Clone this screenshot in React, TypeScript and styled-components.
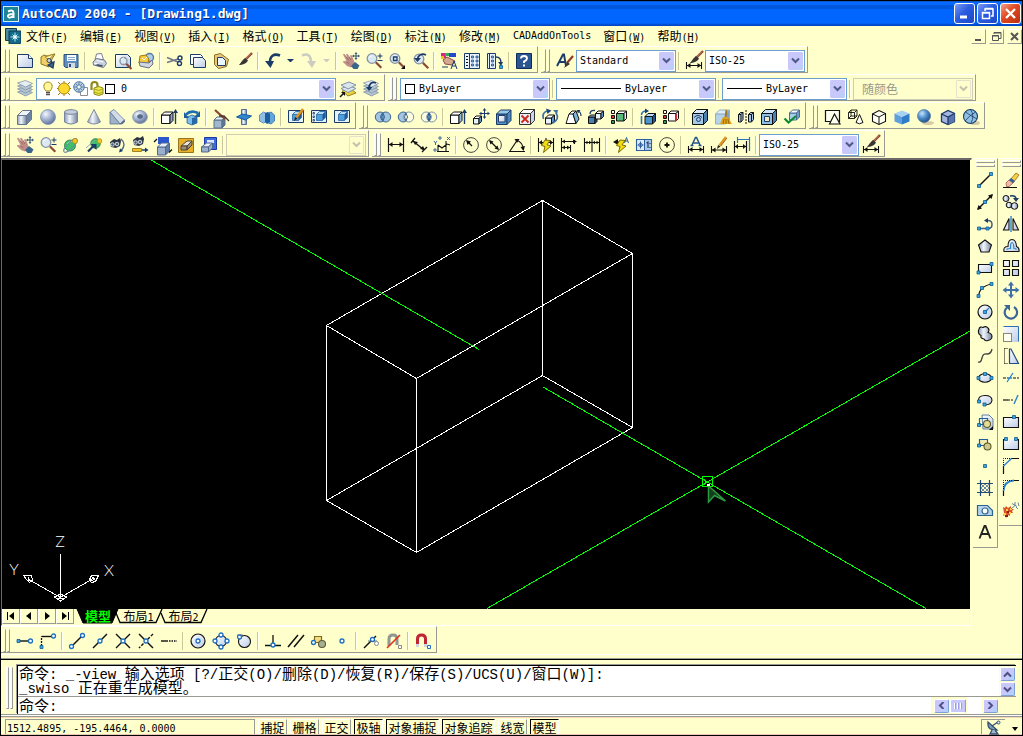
import React, { ReactNode } from 'react';
import styled, { createGlobalStyle, css } from 'styled-components';

const color = {
  face: '#ffffcc',
  shadow: '#9a9a94',
  dark: '#6e6a6a',
  frame: '#6a9fd0',
  lavender: '#c8c8fa',
  navy: '#1b3c68',
};

const GlobalStyle = createGlobalStyle`
  *, *::before, *::after { box-sizing: border-box; }
  html, body { margin: 0; padding: 0; background: #000; }
  body {
    font-family: "DejaVu Sans Mono", "Noto Sans CJK SC", monospace;
    font-size: 10px;
    line-height: 16px;
    color: #000;
  }
  button, input, select { font: inherit; color: inherit; margin: 0; padding: 0; border: 0; background: none; border-radius: 0; }
  button { cursor: default; }
`;

/* ---------- text helpers ---------- */

const Han = styled.span<{ $size: number }>`
  font-family: "Noto Sans CJK SC", sans-serif;
  font-size: ${(p) => p.$size}px;
`;

function Mixed({ text, size = 12 }: { text: string; size?: number }) {
  return (
    <>
      {text.split(/([\u3000-\u9fff]+)/).map((part, i) =>
        i % 2 ? <Han key={i} $size={size}>{part}</Han> : part,
      )}
    </>
  );
}

/* ---------- icon drawing ---------- */

const K = '#111';
const N = '#1b3c68';
const G1 = 'url(#steel)';
const G2 = 'url(#ball)';
const G3 = 'url(#azure)';
const G4 = 'url(#paper)';

type ShapeProps = { d: string; s?: string; f?: string; w?: number; dash?: string };
const P = ({ d, s = K, f = 'none', w = 1, dash }: ShapeProps) => (
  <path d={d} stroke={s} fill={f} strokeWidth={w} strokeDasharray={dash} />
);
const F = ({ d, f = K }: { d: string; f?: string }) => <path d={d} fill={f} />;
type CircleProps = { x: number; y: number; r: number; s?: string; f?: string; w?: number };
const O = ({ x, y, r, s = K, f = 'none', w = 1 }: CircleProps) => (
  <circle cx={x} cy={y} r={r} stroke={s} fill={f} strokeWidth={w} />
);
/* grip point of a drafting tool */
const D = ({ x, y }: { x: number; y: number }) => (
  <path d={`M${x - 1.5} ${y - 1.5}h3v3h-3z`} fill="#3aa6e0" stroke="#0b5c94" strokeWidth={0.8} />
);
/* object snap marker */
const S = ({ x, y }: { x: number; y: number }) => <O x={x} y={y} r={2} s="#1c6fc4" f="#fff" w={1.3} />;

type CubeProps = { x: number; y: number; a?: number; b?: number; front?: string; top?: string; side?: string; s?: string };
const Cube = ({ x, y, a = 8, b = 4, front = '#dfe8f4', top = '#fff', side = '#7d9cc4', s = K }: CubeProps) => (
  <g stroke={s} strokeLinejoin="round">
    <path d={`M${x} ${y + b}h${a}v${a}h${-a}z`} fill={front} />
    <path d={`M${x} ${y + b}l${b} ${-b}h${a}l${-b} ${b}z`} fill={top} />
    <path d={`M${x + a} ${y + b}l${b} ${-b}v${a}l${-b} ${b}z`} fill={side} />
  </g>
);

const Lens = ({ x = 6, y = 5.5, r = 4.8 }: { x?: number; y?: number; r?: number }) => (
  <>
    <P d={`M${x + r - 1} ${y + r - 1}L${x + r + 4.5} ${y + r + 4.5}`} s="#8a4a34" w={2.2} />
    <O x={x} y={y} r={r} s="#8592a2" f="#dbe9f2" w={1.3} />
    <P d={`M${x - 2.5} ${y - 1}q1-2 3-2`} s="#fff" />
  </>
);
const Hand = () => (
  <>
    <F d="M0 1.500q1-1.500 2 0l3 4-2-4q1-1.500 2 0l3 4-1-3q1.500-1 2 0.500l2 5 1 3-4 3.500-4-1.500-4-4q0-1.500 1.500-1l2.500 1z" f="#c08e88" />
    <P d="M3 3.500l3 4M6 4l2 3M2.500 8l4 3" s="#94605e" w={0.8} />
    <F d="M8 13l4-4 4.500 3.500-2 3.500h-4z" f="#3b6588" />
  </>
);
const Brush = () => (
  <>
    <P d="M16 0L9 7" s="#8a3c2c" w={2.4} />
    <P d="M15 0.500L9.500 6" s="#e8b090" w={0.7} />
    <F d="M9 5l3 2.500C10 11 6 12 3 12 5 10 6 7 9 5z" f="#3a3434" />
  </>
);
const DimBrush = () => (
  <>
    <g transform="translate(1 -2)"><Brush /></g>
    <P d="M0.500 9v7M15.500 9v7M1 12.500h14" w={1.1} />
    <F d="M1 12.500l3.500-2.500v5zM15 12.500l-3.500-2.500v5z" />
  </>
);
const Layers = () => (
  <>
    {[10, 7, 4, 1].map((y, i) => (
      <P key={y} d={`M0.500 ${y + 1}l8-2.500 7 3-7 3.500z`} s="#8194a8" f={i === 3 ? '#e6eef2' : '#b4c4d0'} w={0.8} />
    ))}
  </>
);
const Bolt = () => <P d="M7 3L3.500 8.500l3.500 1L5.500 15.500 13 9l-4-1.200L12 3.500z" s="#6c5c00" f="#f4dc10" w={0.9} />;
const Picture = () => <P d="M0.500 1.500h15v12h-15z" s={N} f="#e6f1fb" />;
const Pencil = () => (
  <>
    <P d="M15 0L8.500 8.500" s="#e0981e" w={2.6} />
    <P d="M16 1L9.800 9" s="#8a4c10" w={0.8} />
    <F d="M9.500 9.500L6 12l1-4z" f="#2a2018" />
  </>
);
const Camera = () => (
  <>
    <F d="M1 5l4-3 3 1 3-2 1 3-1 5-4 2-5-1z" f="#2b3440" />
    <O x={3.500} y={7.500} r={1.800} s="#dfe6ee" f="#57677c" w={0.9} />
    <O x={8} y={7} r={1.800} s="#dfe6ee" f="#57677c" w={0.9} />
  </>
);
const Faces = ({ f }: { f: string }) => (
  <>
    <P d="M0.500 1.500h3v3h-3z" f="#fff" />
    <P d="M0.500 6.500h3v3h-3z" f="#e03030" />
    <P d="M0.500 11.500h3v3h-3z" f={f} />
  </>
);
const AxisArrow = () => (
  <>
    <P d="M14.500 3v12" s={N} w={1.4} />
    <F d="M14.500 0l2.500 4h-5z" f={N} />
  </>
);
const BlueSolid = () => <Cube x={4.500} y={2.500} a={6} b={3} front="#4b9fdc" top="#b5dcf5" side="#1d5c9c" s="#3b7ab4" />;

const icons: Record<string, ReactNode> = {
  new: <><P d="M0.500 1.500h11l4 4v9h-15z" s={N} f={G4} /><P d="M11.500 1.500v4h4" s={N} f="#fff" /></>,
  open: <><P d="M1 4l3-2 3 1 8-2-3 5-3 8-8-3z" s="#8a7324" f="#f2cf62" /><P d="M5 4l9-3-5 6z" s="#a88c34" f="#fff2a8" /><P d="M7 6.500q5 0 5 4M8 12l6-3-1 6z" s={N} f="#42668c" w={1.3} /><O x={9} y={7.500} r={2} s="#384858" f="#ccd9e4" /></>,
  save: <><P d="M1 1.500h14v13H2.500l-1.500-1.500z" s="#294f80" f="#5f8dbf" /><F d="M4 2h9v6H4z" f="#f5faff" /><P d="M5 4.500h7M5 6.500h7" s="#8ba8c6" /><F d="M5 10h7v5H5z" f="#d2dbe4" /><F d="M6 11h2v3H6z" f="#294f80" /></>,
  print: <><P d="M3 7l1.500-6 5-0.500 2 6z" s="#77808c" f="#fff" /><P d="M1 9l3.500-3.500 8 1.500 2 3.500-3 4-10-2.500z" s="#6c7890" f="#c8d0e0" /><P d="M2 10l9 2.500M4.500 7.500l7 1.500" s="#fff" /><F d="M5 11l6 1-1 2-6-1.500z" f="#4a546c" /></>,
  preview: <><P d="M0.500 1.500h12l3 3v10h-15z" s={N} f={G4} /><Lens x={8.500} y={8} r={3.500} /></>,
  publish: <><O x={11.500} y={4.500} r={4} s="#5b7896" f="#a9d0ee" w={1.400} /><P d="M2 3l6-1 3 4-2 7-8-3z" s="#a0761a" f="#f7cb3a" /><P d="M1 9l10 1 3-3 1 4-4 4-9-2z" s="#667088" f="#d2d6de" /><P d="M4 5l2 2 3-3" s="#fff" /></>,
  cut: <><P d="M0 4.500l11 4.500M0 9.500l11-3.500" s="#6e7888" w={1.400} /><O x={13} y={5} r={2} s="#1c3a68" w={1.400} /><O x={12.500} y={10.500} r={2} s="#1c3a68" w={1.400} /></>,
  copy: <><P d="M0.500 1.500h10l2 2v8h-12z" s={N} f="#fff" /><P d="M3.500 4.500h9l3 3v7h-12z" s={N} f={G4} /></>,
  paste: <><P d="M1.500 2l6-1.500 8 6-2 7-8 2-4-4z" s="#8a6c24" f="#e6c77c" /><P d="M4.500 4.500h5l3 3v5h-8z" s={N} f="#eaf6ff" /></>,
  brush: <Brush />,
  undo: <><P d="M15 2.500C9 0 4.500 3 5 10" s={N} w={2.600} /><F d="M0 8h9l-3.500 7z" f={N} /></>,
  redo: <><P d="M1 2.500c6-2.500 9 0 9 7" s="#ccccc0" w={2.600} /><F d="M6 8h9l-4 7z" f="#ccccc0" /></>,
  pan: <><Hand /><P d="M13 0v6M10 3h6" s={N} w={0.9} /><P d="M12 1l1-1.500 1 1.500M12 5l1 1.500 1-1.500M11 2l-1.500 1 1.500 1M15 2l1.500 1-1.500 1" s={N} w={0.8} /></>,
  zoomRt: <><Lens /><P d="M14 0.500v5M11.500 3h5M11.500 7.500h5" s={N} /></>,
  zoomWin: <><Lens /><P d="M4.500 4h3.500v3.500h-3.500z" s={N} w={1.300} /><F d="M16 12v4h-4z" /></>,
  zoomPrev: <><Lens x={7} y={6} /><P d="M14 2C10 0 6 2 5.500 6" s={N} w={1.800} /><F d="M2 5h7l-3.500 4z" f={N} /></>,
  props: <><F d="M0 0h5v5H0z" f="#d8248c" /><F d="M4 0h4v3H4z" f="#30b050" /><F d="M8 0h7v4H8z" f="#2548cc" /><F d="M0 3h3v3H0z" f="#e8c010" /><P d="M2 7l4-3 8 4-3 4-7-1z" s="#8a4c44" f="#d6a890" /><P d="M10 16l3-8 3 8M11 13h4M1 14h6" s={N} /></>,
  dcenter: <><P d="M0.500 0.500h15v15h-15z" s={N} f="#eaf4ff" /><P d="M5.500 0.500v15" s={N} /><P d="M2 3.500h2M2 6.500h2M2 9.500h2M2 12.500h2" w={1.200} /><P d="M7.500 3h2v2h-2zM12 3h2v2h-2zM7.500 7h2v2h-2zM12 7h2v2h-2zM7.500 11h2v2h-2zM12 11h2v2h-2z" s="#254f88" f="#89b4dc" w={0.8} /></>,
  palettes: <><P d="M0.500 0.500h8v15h-8z" s={N} f="#eaf4ff" /><P d="M2.500 0.500v15" s={N} /><P d="M4.500 3h2v2h-2zM4.500 7h2v2h-2zM4.500 11h2v2h-2z" s="#254f88" f="#89b4dc" w={0.8} /><P d="M9 4q5 0 5 6" s={N} w={1.400} /><F d="M11 9h5l-2 4z" f={N} /><D x={14} y={14} /></>,
  help: <><P d="M0.500 0.500h15v15h-15z" s="#0f2c5e" f="#2a5590" /><P d="M5 5.500q0-2.500 3-2.500t3 2.500q0 1.500-3 3V10M8 11.500v2" s="#fff" w={1.900} /></>,
  textStyle: <><P d="M0 13L6 1.500h1l2 11.500M2.500 9h6" s={N} w={1.900} /><P d="M16 3l-6 7" s="#8a3c2c" w={2.200} /><F d="M10 9l3 2-6 4z" f="#3a3434" /></>,
  dimBrush: <DimBrush />,
  layers: <Layers />,
  layerCur: <><P d="M2 10l9-2 5 4-8 3z" s="#9a8320" f="#e9d13c" /><P d="M1 7.500l8-3 7 3-8 4z" s="#8194a8" f="#dbe6ea" /><P d="M1 4l8-3 7 3-8 4z" s="#8194a8" f="#dbe6ea" /><P d="M0 16l4-4" w={1.500} /><F d="M5 11v4l-4-4z" /></>,
  layerPrev: <><Layers /><P d="M13 2C9 0 6 3 6 7" s={N} w={1.800} /><F d="M3 6h6.500l-3.500 4z" f={N} /></>,
  bulb: <><P d="M5 10C1 6 3 1 7 1s6 5 2 9z" s="#a08a18" f="#fff79a" /><P d="M5 11.500h4M5 13.500h4" s="#545454" w={1.300} /></>,
  sun: <><P d="M1 1l3 3M13 1l-3 3M1 14l3-3M13 14l-3-3M7 0v2M7 15v-2M0 7.500h2M14 7.500h-2" s="#987c10" /><O x={7} y={7.500} r={5.500} s="#b08a10" f="#ffd92e" /></>,
  freeze: <><P d="M7.500 6.500h7v8h-7z" s="#8c8c94" f="#fff" /><O x={6} y={6} r={5.300} s="#56789c" f="#b7d0e4" /><P d="M6 1v10M1 6h10M2.500 2.500l7 7M9.500 2.500l-7 7" s="#56789c" w={0.8} /><O x={6} y={6} r={2.200} s="#56789c" f="#e8f4fb" /></>,
  lock: <><P d="M2.500 9V4q0-3 3-3t3 3v2" s="#8f8a18" w={2.200} /><P d="M5 7q5-3 9 0v6q-4 3-9 0z" s="#8f8a18" f="#ece84a" /><P d="M5 8q5 3 9 0M5 11q5 3 9 0" s="#a8a420" /></>,
  box: <Cube x={0.500} y={1.500} a={9} b={5} front={G1} top="#f0f4fa" side="#6b82a2" s="#65788f" />,
  sphere: <O x={8} y={8} r={7.500} s="#7d92b0" f={G2} w={0.8} />,
  cylinder: <><P d="M1.500 3v10q6.500 4 13 0V3" s="#75849a" f={G1} /><ellipse cx="8" cy="3" rx="6.500" ry="2.300" fill="#c4cedd" stroke="#75849a" /></>,
  cone: <P d="M8 0.500L14.500 13q-6.500 4-13 0z" s="#7d8aa0" f={G1} />,
  wedge: <><P d="M1 3l4-2.500L15.500 11l-4.500 4z" s="#8193a8" f="#d2dce8" /><P d="M1 3l10 12H1z" s="#61758f" f="#9fb2ca" w={0.8} /><P d="M11 15l4.500-4v2l-2.500 2z" s="#61758f" f="#465e80" w={0.8} /></>,
  torus: <><ellipse cx="8" cy="8" rx="7.300" ry="6.500" fill={G2} stroke="#8b98aa" /><ellipse cx="8" cy="7.500" rx="2.500" ry="1.800" fill="#5b6c84" stroke="#4f6682" /></>,
  extrude: <><Cube x={0.500} y={3} a={8.500} b={3} side="#8aa4cc" front="#fff" /><AxisArrow /></>,
  revolve: <><P d="M3 8l5-2 5 2v6l-5 2-5-2z" s="#2a6090" f="#7dbcec" w={0.8} /><F d="M8 9l5-1v6l-5 2z" f="#2769a6" /><P d="M2 5.500q5-5 12-1.500" s="#1d6eae" w={2.600} /><F d="M16 2v6h-6z" f="#1d5e9c" /><F d="M0 3v6h5z" f="#1d5e9c" /></>,
  slice: <><Cube x={1} y={8} a={8} b={3} front="#9fb8d0" top="#e6eef6" side="#58769a" s="#5b7088" /><P d="M2 1l10 9" s="#8a4630" w={2.200} /><P d="M6 7l5 0 5 5" s="#49382e" w={1.300} /></>,
  section: <><P d="M5.500 0.500h5v15h-5z" s="#526e94" f={G1} /><P d="M0.500 8l6-3 9 2-6 4z" s="#125a9c" f="#2e86cc" /></>,
  interfere: <><P d="M0.500 6l4-3 4 2v7l-4 2-4-2z" s="#5c92c4" f="#8fc0e4" /><P d="M7 5l5-2 3.500 3v6l-3.500 3-5-2z" s="#4780ba" f="#64a6da" /><F d="M6 4l3-1 2 2v8l-3 2-2-2z" f="#1c5ea2" /></>,
  setDraw: <><Picture /><BlueSolid /><Pencil /></>,
  setView: <><Picture /><g transform="translate(1 0)"><BlueSolid /></g><P d="M2 3.500h1.500v1.500h-1.500zM2 7h1.500v1.500h-1.500zM2 10.500h1.500v1.500h-1.500z" s={N} f="#fff" w={0.8} /></>,
  setProf: <><Picture /><BlueSolid /></>,
  union: <><O x={5.300} y={8} r={5} s="#3a658e" f="#a3c6e2" /><O x={10.700} y={8} r={5} s="#3a658e" f="#a3c6e2" /><P d="M8 4q-3 4 0 8 3-4 0-8z" s="#3a658e" f="#5d97c8" /></>,
  subtract: <><O x={5.300} y={8} r={5} s="#3a658e" f="#a3c6e2" /><O x={10.700} y={8} r={5} s="#7590ac" f="#fffde0" /><P d="M8 4q-3 4 0 8 3-4 0-8" s="#3a658e" /></>,
  intersect: <><O x={5.300} y={8} r={5} s="#7590ac" f="#fffde0" /><O x={10.700} y={8} r={5} s="#7590ac" /><P d="M8 4q-3 4 0 8 3-4 0-8z" s="#2b5580" f="#5d97c8" /></>,
  faceExtrude: <><Cube x={0.500} y={3} a={8.500} b={3} side="#8fc0e4" front="#fff" /><AxisArrow /></>,
  faceMove: <><Cube x={0.500} y={7} a={5.500} b={2.500} front="#e9f4fa" side="#5b98cc" /><P d="M11.500 0v9M7 4.500h9" s={N} /><F d="M11.500-1l1.800 2.500h-3.600zM11.500 10l1.800-2.500h-3.600zM6 4.500L8.500 2.700v3.600zM17 4.500l-2.500-1.800v3.600z" f={N} /></>,
  faceOffset: <><Cube x={0.500} y={1} a={10.500} b={4} front="#5a96c8" top="#9cc8e8" side="#4f88bc" s={N} /><P d="M2.500 6.500h6.500v6.500h-6.500z" s={N} f={G4} /></>,
  faceDelete: <><Cube x={0.500} y={0.500} a={11} b={4} front="#e6eef8" top="#fff" side="#c8d6ea" s="#333" /><P d="M2.500 6.500l7 7M9.500 6.500l-7 7" s="#d02418" w={1.800} /></>,
  faceRotate: <><Cube x={3.500} y={6} a={6} b={3} front="#e9f4fa" side="#5b98cc" /><P d="M1.500 10Q-0.500 4 5 2M14 4q4 6-3 10" s="#3c6fa4" w={1.700} /><F d="M4-0.500l5.500 2-4 3.500z" f="#1c4878" /><F d="M11 1l5 0-1 4.500z" f="#3c6fa4" /></>,
  faceTaper: <><P d="M1 14.500L4 5l3-3h4l-3 3 3 9.500z" f="#fff" /><P d="M8 5l3-3 3 8-3 4.500z" f="#7db4de" /><P d="M4 5h4" /><P d="M13 2q3 1 3 5" s={N} w={1.200} /><F d="M11.500 1l4 0-2.500 3.500z" f={N} /></>,
  faceCopy: <><Cube x={0.500} y={6} a={6.500} b={2} front="#4b7fae" top="#9cc4e4" side="#2f5c8c" /><Cube x={7.500} y={2} a={5.500} b={2.500} front="#e9f4fa" side="#5b98cc" /><P d="M2 5q0-4 5-3.500" s={N} w={1.300} /></>,
  faceColor: <><Faces f="#30a050" /><Cube x={5.500} y={2} a={7.500} b={2.500} front="#55b87c" top="#fff" side="#dfe8f4" /></>,
  edgeCopy: <><Cube x={5} y={4.500} a={7.500} b={3} front="#4b96d0" top="#b9dcf4" side="#1d5690" /><P d="M1.500 15V6q0-4 5-4" s="#2b73b4" w={1.600} dash="8 1" /><F d="M5-0.500l4 2.500-4 2.500z" f={N} /></>,
  edgeColor: <><Faces f="#30a050" /><Cube x={5.500} y={2} a={7.500} b={2.500} front="#fff" top="#fff" side="#e8eef8" /><P d="M13 5v7" s="#e02020" w={1.600} /></>,
  imprint: <><Cube x={0.500} y={0.500} a={11} b={4} front="#a6c9e6" top="#dcecf8" side="#4c80b0" /><O x={6.500} y={10.500} r={2} s={N} /><P d="M2 8.500q4-4 8 0" s={N} /></>,
  clean: <><Cube x={0.500} y={1} a={10} b={4} front="#b6d3ea" top="#dcecf8" side="#7ca4c8" s="#93aec6" /><P d="M11.500 1l-1 7" s="#a87414" w={1.800} /><F d="M8 8h5l4 7H5z" f="#e0a418" /><P d="M9 10l-1 5M11 10v5M13 10l1 5" s="#8a5c10" w={0.8} /></>,
  separate: <><P d="M0.500 5.500l2-2h2.500v7l-2 2.500h-2.500zM10.500 5.500l2-2h3v7l-2 2.500h-3z" f="#a6c9e6" /><P d="M0.500 5.500h2.500v7M10.500 5.500h3v7M3 5.500l2-2M13.500 5.500l2-2" /><P d="M8 1v14" dash="2 1" /></>,
  shell: <><Cube x={0.500} y={0.500} a={11} b={4} front="#8fc0e4" top="#cde5f8" side="#4c80b0" /><P d="M3.500 7.500h5v5h-5z" s={N} f="#f5e8c8" /></>,
  check: <><Cube x={5.500} y={1} a={7} b={3} front="#a6cdec" top="#fff" side="#6c9cc8" s="#486c94" /><P d="M0.500 9.500l4 4L12 7" s="#0d8a34" w={2.200} /></>,
  wire2d: <><P d="M0.500 1.500h14v11h-14z" f="#fffff0" w={1.200} /><P d="M4.500 15L9.500 5l5.500 10z" f="#fffff0" w={1.200} /></>,
  wire3d: <><P d="M0.500 3.500h6v6h-6zM3 1h6v6H3zM0.500 3.500L3 1M6.500 3.500L9 1M6.500 9.500L9 7M0.500 9.500L3 7" w={0.9} /><P d="M11.500 5.500L8 13.500q3.500 2.500 7 0z" f="#fffff0" /></>,
  hidden: <><P d="M1.500 5L8 1.500l6.500 3v8L8 15.500l-6.500-3z" f="#fffff4" w={1.100} /><P d="M1.500 5L8 8l6.500-3.500M8 8v7.500" /></>,
  flat: <><F d="M0.500 4.500L8 1.500l7.500 3L8 8z" f="#a8d2f4" /><F d="M0.500 4.500L8 8v7.500l-7.500-3z" f="#5da0dc" /><F d="M15.500 4.500L8 8v7.500l7.500-3z" f="#2f7cc8" /></>,
  gouraud: <><ellipse cx="11" cy="14" rx="6" ry="2" fill="#d8cca4" /><O x={7} y={7} r={6.500} s="#3a6a9a" f={G3} w={0.600} /></>,
  flatEdge: <><P d="M1.500 5L8 1.500l6.500 3v8L8 15.500l-6.500-3z" s={N} f="#a6b4e0" w={1.300} /><F d="M8 8l6.500-3.500v8L8 15.500z" f="#5b74b0" /><P d="M1.500 5L8 8l6.500-3.500M8 8v7.500" s={N} w={1.300} /></>,
  gouraudEdge: <><ellipse cx="12" cy="14" rx="5" ry="2" fill="#d8cca4" /><O x={7.500} y={7.500} r={7} s={N} f="#8fc0e4" w={1.100} /><P d="M2.500 3Q8 7 14 10M12.500 3Q6 7 2 12M7.500 0.500Q12 7 8 14" s={N} w={0.8} /></>,
  orbit: <><O x={7} y={8.500} r={5.500} s="#1b7a34" f="#3cc068" w={0.8} /><P d="M4 7q2-3 5-3" s="#c8f4d4" /><ellipse cx="7.500" cy="8.500" rx="9" ry="3" transform="rotate(-45 7.500 8.500)" fill="none" stroke="#6e8ca8" /><O x={12} y={4} r={2.500} s="#b48a14" f="#f4c828" w={0.8} /></>,
  contOrbit: <><O x={9.500} y={6.500} r={4.800} s="#1b7a34" f="#3cc068" w={0.8} /><O x={13.500} y={4} r={2.300} s="#b48a14" f="#f4c828" w={0.8} /><P d="M2 14.500l6-6" s={N} w={2.200} /><F d="M4.500 7h6v6z" f={N} /><P d="M0 11L9 3" s="#8ea8be" /></>,
  swivel: <><Camera /><P d="M12 2q6 5 0 12" s="#4b6a90" w={1.400} /><F d="M10 15.500l1-4 3 2.500z" f={N} /></>,
  distance: <><g transform="translate(0 -2)"><Camera /></g><P d="M0.500 11.500h9v3h-9z" s="#8a6a10" f="#f0c020" w={0.8} /><P d="M10 13h4" s={N} w={1.500} /><F d="M13 10.500l3.500 2.500-3.500 2.500z" f={N} /></>,
  clipAdjust: <><F d="M3 0h11v7H3z" f="#2c57cc" /><Cube x={2.500} y={6} a={8} b={4} front="#9ab0cc" top="#e8eef6" side="#5e7ca4" s="#51698c" /><P d="M-1 5l3-3M14 15.500l3-3" w={1.300} /></>,
  clipFront: <><P d="M0.500 1.500h15v14h-15z" s="#9a741c" f="#e8b028" /><path d="M3 9l6-5h5l-5 5z" fill="#ece4d0" stroke="#4c4436" /><path d="M3 9h6v4H3zM9 9l5-5v4l-5 5z" fill="#9a8c78" stroke="#4c4436" /></>,
  clipBack: <><P d="M3.500 0.500h12v12h-12z" s="#1a3a9c" f="#3f6be0" /><F d="M6 3h7v3H6z" f="#dce6ff" /><path d="M0.500 10l5-4h6l-4 4z" fill="#e8eef6" stroke="#51698c" /><path d="M0.500 10h7v5h-7zM7.500 10l4-4v5l-4 4z" fill="#9ab0cc" stroke="#51698c" /></>,
  dimLinear: <><P d="M0.500 1v14M15.500 1v14M1 7.500h14" w={1.200} /><F d="M1 7.500l3.500-2.500v5zM15 7.500l-3.500-2.500v5z" /></>,
  dimAligned: <><P d="M0 6l4-5M11 15l5-5M2 4l11 9" w={1.300} /><F d="M2 4l5 1-3 3zM14 13l-5-1 3-3z" /></>,
  dimOrd: <><P d="M3 14.500h12M4 8v6M4 8l4 3 5-4 3 1M12 4v10" w={1.100} /><P d="M0 4l1.500 2L3 4M1.500 6v2M5 0h2v2H5zM13 0l3 3M16 0l-3 3M0 12h2v2H0z" s="#2c5c94" w={0.900} /></>,
  dimRadius: <><O x={8} y={8} r={7.400} s="#333" w={0.9} /><P d="M9 9L4.500 4.500" w={1.300} /><F d="M3 3l5 1.500L4.500 8z" /></>,
  dimDia: <><O x={8} y={8} r={7.400} s="#333" w={0.9} /><P d="M4 4l8 8" w={1.300} /><F d="M3 3l4.500 1.500-3 3zM13 13l-4.500-1.500 3-3z" /></>,
  dimAng: <><P d="M0 14.500h16M1 14L9 2M7 3q7 2 7.500 10" w={1.200} /><F d="M5.500 2l5 0-2.500 4zM14.500 14l-3-4 4.500-1z" /></>,
  dimQuick: <><P d="M0.500 1v14M15.500 1v14M8 1v3M1 5.500h14" w={1.100} /><F d="M1 5.500L4 3v5zM15 5.500L12 3v5z" /><Bolt /></>,
  dimBase: <><P d="M0.500 1v14M1 4.500h12M1 10.500h8M9.500 8v7M13.500 3v4" w={1.100} /><F d="M1 4.500L4 2.500v4zM16 4.500l-4-2v4zM1 10.500l3-2v4zM9 10.500l-3-2v4z" /></>,
  dimCont: <><P d="M0.500 1v14M8 1v14M15.500 1v14M1 5.500h14" w={1.100} /><F d="M1 5.500l2.500-1.800v3.600zM7.500 5.500l-2.500-1.800v3.600zM8.500 5.500l2.500-1.800v3.600zM15 5.500l-2.500-1.800v3.600z" /></>,
  leader: <><P d="M2 5h8" w={1.300} /><F d="M0 5l5-3v6z" /><P d="M11.500 6L13.500 0.500 15.500 6M12 4h3" s="#2c5c94" /><Bolt /></>,
  tolerance: <><P d="M0.500 2.500h15v11h-15z" s="#2c5f9c" f="#dcebf8" w={1.100} /><F d="M9 3h6v10H9z" f="#a9c8e8" /><P d="M8.500 2.500v11M4.500 4.500v7M1.500 8h6" s="#2c5f9c" /><O x={4.500} y={8} r={1.800} s="#2c5f9c" w={0.8} /><P d="M10.500 6l1.500-1v6M14 6v1M14 10v1" s={N} w={1.200} /></>,
  centerMark: <><O x={8} y={8} r={7.400} s="#333" w={0.9} /><P d="M8 5.500v5M5.500 8h5" w={1.800} /></>,
  dimEdit: <><P d="M3.500 9L7.500 0.500h1l4 8.500M5 6h6M2.500 8.500h3M10.500 8.500h3" s="#24548c" w={1.500} /><P d="M0.500 9v7M15.500 9v7M1 12.500h14" w={1.100} /><F d="M1 12.500L4.500 10v5zM15 12.500L11.500 10v5z" /></>,
  dimTedit: <><Pencil /><P d="M0.500 9v7M15.500 9v7M1 13h14" w={1.100} /><F d="M1 13l3.500-2.500v5zM15 13l-3.500-2.500v5z" /></>,
  dimUpdate: <><P d="M3.500 0v6M15.500 0v14M4 2.500h11" s="#2f72b8" w={1.200} /><P d="M0.500 4v12M12.500 4v12M1 9.500h11" w={1.200} /><F d="M1 9.500L4 7v5zM12 9.500L9 7v5z" /></>,

  line: <><P d="M2 14L14 2" w={1.500} /><D x={2} y={14} /><D x={14} y={2} /></>,
  xline: <><P d="M1 15L15 1" w={1.500} /><F d="M0 16l1.500-5 3.500 3.500zM16 0l-5 1.500L14.500 5z" /><D x={8} y={8} /></>,
  pline: <><P d="M2 12.500h9q4 0 4-4T11 4.500" s="#4a5c78" w={1.500} /><D x={2} y={12.500} /><D x={10.500} y={12.500} /><F d="M7 4.500l4-2.500v5z" f={N} /></>,
  polygon: <P d="M8 2L14.500 7l-2.500 7h-8L1.500 7z" f={G1} w={1.100} />,
  rect: <><P d="M1.500 4.500h13v8h-13z" f={G4} w={1.100} /><D x={1.500} y={12.500} /><D x={14.500} y={4} /></>,
  arc: <><P d="M1.500 15Q2 4 15 2" w={1.200} /><D x={1.500} y={14} /><D x={5} y={6} /><D x={14.500} y={2} /></>,
  circle: <><O x={8} y={8} r={7} f={G4} w={1.200} /><P d="M8 8l4-4" s="#2a82cc" w={1.500} /><D x={8} y={8} /></>,
  revcloud: <P d="M2 3q1-3 4-1.500 3-2 5 0.500 2 2 0 4.500 4 1 4 4t-4 4q-3 1-4-1.500-4-0.500-3-3.500-4-2-2-6.500z" f={G1} w={1.100} />,
  spline: <P d="M1 14q3 1 4-4t5-4q4 0 5-5" s="#444" w={1.300} />,
  ellipse: <><ellipse cx="8" cy="8" rx="6.500" ry="4.200" fill={G4} stroke={K} strokeWidth="1.100" /><D x={1.500} y={8} /><D x={14.500} y={8} /><D x={8} y={4} /></>,
  ellipseArc: <><P d="M1.500 9Q1 3.500 8 3.500t7 5Q14 13 8 13" f={G4} w={1.100} /><D x={2} y={9.500} /><D x={7.500} y={12.500} /></>,
  insert: <><P d="M5 1h7l4 4v10H6z" s="#6080a0" f={G4} /><P d="M2.500 4.500h8v6h-8z" s="#245e98" w={1.200} /><O x={10} y={10} r={3.500} s="#5c5a28" f="#e4dc98" w={1.100} /><D x={2} y={11} /><F d="M16 12v4h-4z" /></>,
  block: <><P d="M2.500 3.500h8v6h-8z" s="#245e98" f="#f4ecae" w={1.200} /><O x={10.500} y={10.500} r={3.500} s="#5c5a28" f="#cfc88c" w={1.100} /><D x={2} y={9.500} /></>,
  point: <D x={8} y={8} />,
  hatch: <><P d="M3.500 0v16M12.500 0v16M0 3.500h16M0 12.500h16" s="#254a78" w={1.200} /><P d="M4 8l4-4M4 12l8-8M8 12l4-4M4 4l8 8M4 8l4 4M8 4l4 4" s="#2a5488" w={0.700} /></>,
  region: <><P d="M0.500 3.500h10l5 5v5h-15z" s="#2c6490" f="#b4d4ea" w={1.200} /><O x={8} y={9} r={3} s="#2c6490" f="#fff" w={1.200} /></>,
  mtext: <P d="M2.500 14.500L7.500 2h1l5 12.500M4.500 10h7" s="#222" w={1.900} />,

  erase: <><P d="M0 15.500h14" /><P d="M3 11l3-3 4 3-4 3.500H3.500z" s="#a05a50" f="#f2b8a8" w={0.8} /><P d="M7 8l6-7 3 2-6 8z" s="#9a6414" f="#f4d048" w={0.8} /><F d="M6 8l2-2 4 3-2 2z" f="#3060a0" /></>,
  copyObj: <><O x={3} y={4.500} r={3} f={G1} /><O x={6} y={11} r={2.800} f={G1} /><O x={11.500} y={12} r={3.300} f={G1} /><P d="M7 2q6-1 6 3" s={N} w={1.500} /><F d="M10 4h6l-3 4z" f={N} /></>,
  mirror: <><P d="M6 2.500v11.500h-5.500zM10 2.500v11.500h5.500z" f={G4} w={1.100} /><P d="M8 0v16" s="#2a82cc" w={1.400} /></>,
  offset: <><P d="M1 13.500q-1-5 4-5 0-7 4-7t4.500 7q3 1 2.500 5z" f={G4} w={1.100} /><P d="M3.500 11.500q1-1 4-1 0-6 1.500-6t2 6q2 0 2.500 1" s="#2a82cc" w={1.200} /></>,
  array: <P d="M0.500 0.500h6v6h-6zM9.500 0.500h6v6h-6zM0.500 9.500h6v6h-6zM9.500 9.500h6v6h-6z" f={G4} w={1.100} />,
  move: <><P d="M8 2v12M2 8h12" s="#3f70a8" w={2} /><F d="M8-0.500l3 4H5zM8 16.500l3-4H5zM-0.500 8l4-3v6zM16.500 8l-4-3v6z" f="#3f70a8" /></>,
  rotate: <><P d="M4 3.500A6.200 6.200 0 1 0 11 3" s="#3a6698" w={2.200} /><F d="M1 1h6v6z" f="#3a6698" /></>,
  scale: <><F d="M0 0h16v16H9V7H0z" f={G4} /><P d="M0.500 0.500h15v15" s="#2c70b0" /><P d="M0.500 7.500h8v8h-8z" dash="1 1" f="#fffff0" /></>,
  stretch: <><P d="M1.500 0.500v15M1.500 0.500h3M1.500 15.500h4" dash="1 1" /><P d="M6.500 1v14.500h9L8 1z" s="#1f4e82" f={G4} w={1.200} /></>,
  trim: <><P d="M0 8h5M10 8h6" dash="3 1" w={1.200} /><P d="M5 8h4M4 12l6-9" s="#2a82cc" w={1.300} /></>,
  extend: <><P d="M0 8h5" w={1.200} /><P d="M5 8h6" dash="2 1" /><P d="M11 12l4-9" s="#2a82cc" w={1.400} /></>,
  breakPt: <><P d="M0.500 3.500h15v10h-15z" f={G4} w={1.100} /><D x={11} y={3} /></>,
  breakObj: <><P d="M3 3.500H0.500v10h15v-10H13" f={G4} w={1.100} /><D x={3} y={3} /><D x={13} y={3} /></>,
  chamfer: <><P d="M0.500 16V8M8 0.500h8" w={1.200} /><P d="M0.500 8l8-7.500" s="#2a82cc" w={1.400} /><P d="M0.500 7V0.500H7" dash="1 1" /></>,
  fillet: <><P d="M0.500 16v-5M11 0.500h5" w={1.200} /><P d="M0.500 11Q1 1 11 0.500" s="#2a82cc" w={1.800} /><P d="M0.500 9V0.500H9" dash="1 1" /></>,
  explode: <><F d="M0 5l2 1 1-2 2 2 3-2 0 3 3 0-2 2 1 2-3 0 0 3-2-1-2 3-1-3-2 1 1-3z" f="#d8502c" /><F d="M3 7h2v2H3zM7 6h2v2H7zM6 10h2v2H6zM1 11h2v2H1z" f="#ffd040" /><F d="M4 9h2v2H4zM2 13h3v2H2z" f="#90180c" /><P d="M8 7l4-3.500M12 0v4M9 1.500l5 3M15 0.500l1 3.500M13 5l2 2" s="#61809c" /></>,

  trackPt: <><P d="M3 8h8" w={1.400} /><D x={1.500} y={8} /><S x={13.500} y={8} /></>,
  snapFrom: <><P d="M1.500 13V3.500" dash="2 1" w={1.300} /><P d="M1.500 3.500h10" w={1.400} /><D x={1.500} y={14} /><S x={13.500} y={3} /></>,
  endpoint: <><P d="M2 14L14 2" w={1.400} /><S x={2.500} y={13.500} /><S x={13.500} y={2.500} /></>,
  midpoint: <><P d="M1 15L15 1" w={1.400} /><S x={8} y={8} /></>,
  intersection: <><P d="M1 1l14 14M15 1L1 15" w={1.400} /><S x={8} y={8} /></>,
  apparent: <><P d="M1 1l14 14" w={1.400} /><P d="M15 1L1 15" dash="3 1.500" w={1.400} /><S x={8} y={8} /></>,
  extension: <><P d="M0 8h7" w={1.400} /><P d="M8 8h8" dash="1.500 1" w={1.400} /></>,
  centre: <><O x={8} y={8} r={7} f={G4} w={1.200} /><S x={8} y={8} /></>,
  quadrant: <><O x={8} y={8} r={5.500} f={G4} w={1.100} /><S x={8} y={2} /><S x={8} y={14} /><S x={2} y={8} /><S x={14} y={8} /></>,
  tangent: <><P d="M1 2h6" s="#777" /><O x={8.500} y={8.500} r={6} f={G4} w={1.100} /><S x={3.500} y={4} /></>,
  perp: <><P d="M8 2v10M0 12.500h16" w={1.300} /><S x={8} y={12} /></>,
  parallel: <P d="M0 14L10 2M6 14L16 2" w={1.500} />,
  snapInsert: <><P d="M3.500 3.500h7v6h-7z" s="#7c6c24" f="#f4dc80" w={1.200} /><O x={11} y={11} r={3.500} s="#5c5a38" f="#a6b090" w={1.100} /><S x={2.500} y={9.500} /></>,
  node: <S x={8} y={8} />,
  nearest: <><P d="M1 15L13 3" w={1.400} /><P d="M5 8h9" s="#666" /><S x={9.500} y={6.500} /><O x={13.500} y={10.500} r={2} s="#888" f="#fff" /></>,
  snapNone: <><P d="M3 13V6q0-4 4-4t4 4v6" s="#909890" w={3} /><P d="M1 15L14 2" s="#e03020" w={1.600} /><P d="M12.500 12.500h3v3h-3z" s="#888" f="#fff" /></>,
  magnet: <><P d="M2.500 12V6q0-4 4-4t4 4v6" s="#c02434" w={3} /><P d="M2.500 11v3M10.500 11v3" s="#d0d4dc" w={3} /><P d="M12.500 12.500h3v3h-3z" s="#1c6fc4" f="#fff" /></>,
  dish: <><P d="M2 2q-1 9 9 8z" s="#34506e" f="#7c9cba" w={1.300} /><P d="M6 6l6-4M6 10l-2 4h8l-3-4" s="#34506e" f="#9cb8d0" w={1.300} /><O x={12.500} y={2.500} r={1.500} s="#34506e" f="#dbe8f0" /></>,
};

const Glyph = styled.svg`
  display: block;
  flex: none;
  width: 16px;
  height: 16px;
  overflow: visible;
  fill: none;
`;
const Icon = ({ name }: { name: string }) => (
  <Glyph viewBox="0 0 16 16" aria-hidden="true">{icons[name]}</Glyph>
);

/* ---------- window chrome ---------- */

const Window = styled.div`
  display: flex;
  flex-direction: column;
  min-height: 100vh;
  border: 1px solid #000;
  background: ${color.face};
`;

const TitleBar = styled.header`
  display: flex;
  align-items: center;
  height: 25px;
  padding: 0 1px 0 2px;
  background: linear-gradient(#0a58cc 0 1px, #0768ff 1px 4px, #0058dc 4px 8px, #0066ff 8px 22px, #0048c8 24px);
  color: #fff;
`;
const Title = styled.h1`
  flex: 1;
  margin: 0 0 0 3px;
  font-size: 13px;
  font-weight: bold;
  line-height: 24px;
  white-space: nowrap;
  text-shadow: 1px 1px #0a2a80;
`;
const Logo = styled.svg`
  display: block;
  width: 16px;
  height: 16px;
`;
const CaptionButtons = styled.div`
  display: flex;
  gap: 2px;
`;
const CaptionButton = styled.button<{ $close?: boolean }>`
  display: grid;
  place-items: center;
  width: 21px;
  height: 21px;
  border: 1px solid #fff;
  border-radius: 3px;
  background: ${(p) => (p.$close
    ? 'linear-gradient(135deg, #f0a088, #e04820 45%, #b83010)'
    : 'linear-gradient(135deg, #7a9cf4, #2c5ce0 45%, #1c48c8)')};
`;

const MenuBar = styled.nav`
  display: flex;
  align-items: center;
  height: 20px;
  padding: 0 0 0 4px;
`;
const MenuIcon = styled.svg`
  display: block;
  width: 16px;
  height: 16px;
  margin-right: -1px;
`;
const MenuItem = styled.button`
  height: 20px;
  padding: 0 6px;
  line-height: 20px;
  white-space: nowrap;
`;
const ChildButtons = styled.div`
  display: flex;
  gap: 3px;
  margin-left: auto;
`;
const ChildButton = styled.button`
  display: grid;
  place-items: center;
  width: 15px;
  height: 15px;
  border: 1px solid #fff;
  border-right-color: ${color.shadow};
  border-bottom-color: ${color.shadow};
`;

/* ---------- toolbars ---------- */

const bevel = css`
  border-top: 1px solid #fff;
  border-right: 1px solid ${color.shadow};
  border-bottom: 1px solid ${color.shadow};
`;
const ToolRow = styled.div`
  display: flex;
  gap: 3px;
  height: 28px;
  padding-bottom: 1px;
`;
const Bar = styled.div`
  ${bevel}
  display: flex;
  align-items: center;
  padding: 2px 2px 0 0;
`;
const GripBox = styled.span<{ $across?: boolean }>`
  display: flex;
  flex: none;
  flex-direction: ${(p) => (p.$across ? 'column' : 'row')};
  gap: 1px;
  align-self: stretch;
  padding: ${(p) => (p.$across ? '1px 2px 0 3px' : '0 3px 0 2px')};
  i {
    flex: none;
    width: ${(p) => (p.$across ? 'auto' : '3px')};
    height: ${(p) => (p.$across ? '3px' : 'auto')};
    border: 1px solid #fff;
    border-right-color: ${color.shadow};
    border-bottom-color: ${color.shadow};
  }
`;
const Grip = ({ across }: { across?: boolean }) => (
  <GripBox $across={across} aria-hidden="true"><i /><i /></GripBox>
);

const ToolButton = styled.button`
  display: flex;
  flex: none;
  align-items: center;
  justify-content: center;
  width: 23px;
  height: 22px;
`;
const Separator = styled.span`
  flex: none;
  width: 2px;
  height: 18px;
  margin: 0 2px;
  border-left: 1px solid #c9c79c;
  border-right: 1px solid #fffff0;
`;
const MoreButton = styled.button<{ $off?: boolean }>`
  width: 13px;
  height: 22px;
  padding: 9px 3px;
  color: ${(p) => (p.$off ? '#ccccc0' : color.navy)};
  &::before {
    content: "";
    display: block;
    border: 3px solid transparent;
    border-top-color: currentColor;
  }
`;

/* A string of tool names: "|" is a divider, "v" and "w" are the flyout arrows. */
function Tools({ names }: { names: string }) {
  return (
    <>
      {names.split(' ').map((n, i) => {
        if (n === '|') return <Separator key={i} />;
        if (n === 'v' || n === 'w') return <MoreButton key={i} $off={n === 'w'} aria-label="More" />;
        return <ToolButton key={i} aria-label={n}><Icon name={n} /></ToolButton>;
      })}
    </>
  );
}

const ComboBox = styled.div<{ $width: number; $off?: boolean }>`
  display: grid;
  flex: none;
  grid-template-columns: minmax(0, 1fr);
  width: ${(p) => p.$width}px;
  height: 22px;
  border: 1px solid ${(p) => (p.$off ? '#cfcdb8' : color.frame)};
  background: ${(p) => (p.$off ? color.face : '#fff')};
  color: ${(p) => (p.$off ? '#98988c' : '#000')};
  > * { grid-area: 1 / 1; }
`;
const ComboSelect = styled.select<{ $indent: number; $han?: boolean }>`
  appearance: none;
  width: 100%;
  padding: 0 18px 0 ${(p) => p.$indent}px;
  ${(p) => p.$han && 'font-family: "Noto Sans CJK SC", sans-serif; font-size: 12px;'}
  opacity: 1;
`;
const ComboFront = styled.span`
  display: flex;
  align-items: center;
  padding: 0 1px 0 4px;
  pointer-events: none;
`;
const Arrow = styled.span<{ $off?: boolean }>`
  display: grid;
  place-items: center;
  width: 15px;
  height: 18px;
  margin-left: auto;
  border-radius: 1px;
  background: ${(p) => (p.$off ? color.face : `linear-gradient(135deg, ${color.lavender} 70%, #aad4f8)`)};
  border: 1px solid ${(p) => (p.$off ? '#e4e2cc' : color.lavender)};
  color: ${(p) => (p.$off ? '#c4c2ac' : '#4d5a86')};
`;
const Chevron = ({ turn = 0 }: { turn?: number }) => (
  <svg width="9" height="7" viewBox="0 0 9 7" aria-hidden="true">
    <path d="M1 1.500l3.500 3.500L8 1.500" fill="none" stroke="currentColor" strokeWidth="2" transform={`rotate(${turn} 4.500 3.500)`} />
  </svg>
);
const Swatch = styled.span`
  width: 10px;
  height: 10px;
  border: 1px solid #000;
  background: #fff;
`;
const LineSample = styled.span<{ $length: number }>`
  width: ${(p) => p.$length}px;
  border-top: 1px solid #000;
`;
type ComboProps = { label: string; value: string; width: number; indent?: number; off?: boolean; han?: boolean; children?: ReactNode };
const Combo = ({ label, value, width, indent = 3, off, han, children }: ComboProps) => (
  <ComboBox $width={width} $off={off}>
    <ComboSelect $indent={indent} $han={han} aria-label={label} disabled={off}>
      <option>{value}</option>
    </ComboSelect>
    <ComboFront>
      {children}
      <Arrow $off={off}><Chevron /></Arrow>
    </ComboFront>
  </ComboBox>
);

/* ---------- work area ---------- */

const WorkArea = styled.div`
  display: flex;
  flex: 1;
  gap: 1px;
`;
const Document = styled.main`
  display: flex;
  flex: 1;
  flex-direction: column;
  min-width: 0;
  border-top: 2px solid ${color.dark};
  border-left: 1px solid ${color.dark};
  border-right: 1px solid #fff;
  border-bottom: 1px solid #fff;
`;
const Viewport = styled.div`
  display: flex;
  flex: 1;
  min-height: 300px;
  margin-right: 1px;
  background: #000;
`;
const Drawing = styled.svg`
  display: block;
  flex: 1;
  width: 100%;
  min-width: 0;
`;
const SideBar = styled.div`
  ${bevel}
  display: flex;
  flex-direction: column;
  align-self: flex-start;
  align-items: center;
  width: 25px;
  padding-bottom: 4px;
  > ${GripBox} { width: 24px; height: 10px; }
  & + & { width: 23px; border-right: 0; }
  > ${ToolButton} { width: 22px; }
`;

const SheetTabs = styled.div`
  display: flex;
  height: 16px;
`;
const SheetNav = styled.button`
  display: grid;
  place-items: center;
  width: 18px;
  height: 15px;
  border-right: 1px solid ${color.shadow};
  border-bottom: 1px solid ${color.shadow};
  border-left: 1px solid #fff;
`;
const TabList = styled.div`
  display: flex;
  margin-left: 3px;
`;
const SheetTab = styled.button<{ $on?: boolean }>`
  position: relative;
  width: ${(p) => (p.$on ? 42 : 45)}px;
  height: 15px;
  margin-right: ${(p) => (p.$on ? -3 : 0)}px;
  line-height: 14px;
  font-weight: ${(p) => (p.$on ? 'bold' : 'normal')};
  color: ${(p) => (p.$on ? '#00ff00' : '#000')};
`;
const TabShape = styled.svg`
  position: absolute;
  inset: 0;
  width: 100%;
  height: 100%;
  overflow: visible;
`;
const TabText = styled.span`
  position: relative;
`;

/* ---------- command window ---------- */

const SnapDock = styled.div`
  padding-bottom: 5px;
  box-shadow: inset 0 -4px ${color.face}, inset 0 -5px #fff;
`;
const CommandDock = styled.section`
  display: flex;
  padding: 5px 6px 0 3px;
  border-top: 1px solid #000;
  box-shadow: 0 -1px ${color.shadow};
`;
const CommandGrip = styled.div`
  display: flex;
  padding: 2px 1px 5px 0;
`;
const CommandBody = styled.div`
  flex: 1;
  min-width: 0;
  border-top: 1px solid #000;
  border-left: 1px solid #000;
  box-shadow: -1px -1px ${color.shadow};
  font-family: "Liberation Mono", "Noto Sans CJK SC", monospace;
  font-size: 14px;
`;
const History = styled.div`
  display: flex;
  height: 31px;
  border-bottom: 1px solid ${color.shadow};
  background: #fff;
`;
const HistoryText = styled.div`
  flex: 1;
  min-width: 0;
  padding-left: 1px;
  line-height: 14px;
  white-space: pre;
  p { margin: 0; height: 14px; }
`;
const PromptRow = styled.div`
  display: flex;
  height: 17px;
  padding-right: 17px;
`;
const PromptLabel = styled.label`
  padding-left: 1px;
  background: #fff;
  line-height: 16px;
`;
const PromptInput = styled.input`
  flex: 1;
  min-width: 0;
  background: #fff;
  outline: none;
`;
const ScrollColumn = styled.div`
  display: flex;
  flex-direction: column;
  gap: 1px;
  width: 17px;
  padding: 1px 1px 0 1px;
  background: ${color.face};
`;
const ScrollRow = styled.div`
  display: flex;
  align-items: center;
  width: 68px;
  gap: 1px;
  padding: 0 1px 0 3px;
  background: ${color.face};
`;
const ScrollButton = styled.button`
  display: grid;
  place-items: center;
  width: 15px;
  height: 14px;
  border: 1px solid #fff;
  border-right-color: #7da0d8;
  border-bottom-color: #7da0d8;
  border-radius: 2px;
  background: linear-gradient(135deg, ${color.lavender} 60%, #a8d4fa);
  color: #4d4f86;
`;
const Thumb = styled.span`
  display: flex;
  justify-content: center;
  gap: 1px;
  width: 16px;
  height: 14px;
  padding: 3px 0;
  border: 1px solid #fff;
  border-right-color: #7da0d8;
  border-radius: 2px;
  background: ${color.lavender};
  i { width: 1px; background: #fff; box-shadow: 1px 0 #9a9ae0; margin-right: 1px; }
`;
const Track = styled.span`
  flex: 1;
  align-self: stretch;
  background: #fff;
`;

/* ---------- status bar ---------- */

const StatusBar = styled.footer`
  display: flex;
  gap: 3px;
  height: 21px;
  padding: 5px 4px 0 4px;
  border-bottom: 1px solid #e8c8b8;
  background: linear-gradient(${color.shadow} 1px, #fff 1px 2px, ${color.shadow} 2px 3px, #f4d8b4 3px 4px, ${color.face} 4px);
`;
const Coordinates = styled.output`
  width: 250px;
  padding-left: 1px;
  border: 1px solid ${color.shadow};
  border-bottom: 0;
  line-height: 18px;
  white-space: pre;
`;
const StatusToggle = styled.button<{ $on?: boolean; $wide?: boolean }>`
  width: ${(p) => (p.$wide ? 53 : 29)}px;
  line-height: 15px;
  white-space: nowrap;
  border-top: 1px solid ${(p) => (p.$on ? '#000' : '#fff')};
  border-left: 1px solid ${(p) => (p.$on ? '#000' : '#fff')};
  border-right: 1px solid ${(p) => (p.$on ? '#fff' : color.shadow)};
`;
const Tray = styled.div`
  display: flex;
  align-items: center;
  gap: 7px;
  margin-left: auto;
`;
const TrayButton = styled.button`
  width: 24px;
  height: 15px;
  padding-left: 4px;
  border-top: 1px solid ${color.shadow};
  border-left: 1px solid ${color.shadow};
`;
const TrayMenu = styled.button`
  align-self: flex-end;
  width: 6px;
  height: 7px;
  &::before {
    content: "";
    display: block;
    border: 3px solid transparent;
    border-top: 4px solid #000;
  }
`;

const menus = ['文件(F)', '编辑(E)', '视图(V)', '插入(I)', '格式(O)', '工具(T)', '绘图(D)', '标注(N)', '修改(M)', 'CADAddOnTools', '窗口(W)', '帮助(H)'];

const MenuLabel = ({ text }: { text: string }) => {
  const m = text.match(/^(.+)\((\w)\)$/);
  return m ? <><Han $size={12}>{m[1]}</Han>(<u>{m[2]}</u>)</> : <>{text}</>;
};

const toggles: [string, boolean][] = [
  ['捕捉', false], ['栅格', false], ['正交', false], ['极轴', true],
  ['对象捕捉', true], ['对象追踪', true], ['线宽', false], ['模型', true],
];

export default function App() {
  return (
    <>
      <GlobalStyle />
      <Window>
        <TitleBar>
          <Logo viewBox="0 0 16 16" aria-hidden="true">
            <defs>
              <linearGradient id="steel"><stop offset="0" stopColor="#8b9cb8" /><stop offset=".4" stopColor="#f2f6fb" /><stop offset="1" stopColor="#71839f" /></linearGradient>
              <radialGradient id="ball" cx=".35" cy=".3" r=".75"><stop offset="0" stopColor="#f4f8ff" /><stop offset=".5" stopColor="#a2b2d0" /><stop offset="1" stopColor="#586c98" /></radialGradient>
              <radialGradient id="azure" cx=".35" cy=".3" r=".75"><stop offset="0" stopColor="#c4e4ff" /><stop offset=".5" stopColor="#4d8cc8" /><stop offset="1" stopColor="#1f4c84" /></radialGradient>
              <linearGradient id="paper" x2="1" y2="1"><stop offset="0" stopColor="#fff" /><stop offset="1" stopColor="#bccce6" /></linearGradient>
            </defs>
            <rect x=".5" y=".5" width="15" height="15" fill="#1c8496" stroke="#d8f0f4" />
            <path d="M5 5.500Q10.500 3 10.500 7v5M10 8Q4.500 8 5 10.500 6 13 10.500 10" fill="none" stroke="#fff" strokeWidth="2" />
          </Logo>
          <Title>AutoCAD 2004 - [Drawing1.dwg]</Title>
          <CaptionButtons>
            <CaptionButton aria-label="Minimize"><svg width="15" height="15"><path d="M3 11h7" stroke="#fff" strokeWidth="3" /></svg></CaptionButton>
            <CaptionButton aria-label="Restore"><svg width="15" height="15" fill="none" stroke="#fff"><path d="M5 5V3h8v7h-2M5 2.500h8" strokeWidth="1.500" /><path d="M2.500 6.500h7v6h-7zM2 7h8" strokeWidth="1.500" /></svg></CaptionButton>
            <CaptionButton $close aria-label="Close"><svg width="15" height="15"><path d="M3 3l9 9M12 3l-9 9" stroke="#fff" strokeWidth="2.400" /></svg></CaptionButton>
          </CaptionButtons>
        </TitleBar>

        <MenuBar>
          <MenuIcon viewBox="0 0 16 16" aria-hidden="true">
            <path d="M0.500 0.500h11v12h-11z" fill="#4c8ca0" stroke="#143c50" />
            <path d="M4 3h12v12l-3 1H4z" fill="#156a88" stroke="#0c3c54" />
            <path d="M10 4.500v9M5.500 9h9M7.500 6.500l5 5M12.500 6.500l-5 5" stroke="#a8f0ff" />
            <path d="M8.500 7.500h3v3h-3z" fill="#fff" />
          </MenuIcon>
          {menus.map((m) => <MenuItem key={m}><MenuLabel text={m} /></MenuItem>)}
          <ChildButtons>
            <ChildButton aria-label="Minimize drawing"><svg width="11" height="11"><path d="M2 9h6" stroke="#555" strokeWidth="2" /></svg></ChildButton>
            <ChildButton aria-label="Restore drawing"><svg width="11" height="11" fill="none" stroke="#555"><path d="M3 3V1.500h7v6H8M3 2h7M1.500 4.500h6v5h-6zM1 5h7" /></svg></ChildButton>
            <ChildButton aria-label="Close drawing"><svg width="11" height="11"><path d="M2 2l7 7M9 2L2 9" stroke="#555" strokeWidth="2" /></svg></ChildButton>
          </ChildButtons>
        </MenuBar>

        <ToolRow>
          <Bar><Grip /><Tools names="new open save | print preview publish | cut copy paste brush | undo v redo w | pan zoomRt zoomWin zoomPrev | props dcenter palettes | help" /></Bar>
          <Bar>
            <Grip /><Tools names="textStyle" /><Combo label="Text style" value="Standard" width={100} />
            <Tools names="| dimBrush" /><Combo label="Dimension style" value="ISO-25" width={100} />
          </Bar>
        </ToolRow>
        <ToolRow>
          <Bar>
            <Grip /><Tools names="layers" />
            <Combo label="Layer" value="0" width={300} indent={84}>
              <Icon name="bulb" /><Icon name="sun" /><Icon name="freeze" /><Icon name="lock" /><Swatch />
            </Combo>
            <Tools names="layerCur layerPrev" />
          </Bar>
          <Bar>
            <Grip />
            <Combo label="Color" value="ByLayer" width={150} indent={18}><Swatch /></Combo><Separator />
            <Combo label="Linetype" value="ByLayer" width={160} indent={68}><LineSample $length={60} /></Combo><Separator />
            <Combo label="Lineweight" value="ByLayer" width={125} indent={43}><LineSample $length={35} /></Combo><Separator />
            <Combo label="Plot style" value="随颜色" width={120} indent={8} off han />
          </Bar>
        </ToolRow>
        <ToolRow>
          <Bar><Grip /><Tools names="box sphere cylinder cone wedge torus | extrude revolve | slice section interfere | setDraw setView setProf" /></Bar>
          <Bar><Grip /><Tools names="union subtract intersect | faceExtrude faceMove faceOffset faceDelete faceRotate faceTaper faceCopy faceColor | edgeCopy edgeColor | imprint clean separate shell check" /></Bar>
          <Bar><Grip /><Tools names="wire2d wire3d hidden flat gouraud flatEdge gouraudEdge" /></Bar>
        </ToolRow>
        <ToolRow>
          <Bar><Grip /><Tools names="pan zoomRt orbit contOrbit swivel distance clipAdjust clipFront clipBack |" /><Combo label="Saved view" value="" width={140} off /></Bar>
          <Bar>
            <Grip /><Tools names="dimLinear dimAligned dimOrd | dimRadius dimDia dimAng | dimQuick dimBase dimCont | leader tolerance centerMark | dimEdit dimTedit dimUpdate |" />
            <Combo label="Current dimension style" value="ISO-25" width={100} /><Tools names="dimBrush" />
          </Bar>
        </ToolRow>

        <WorkArea>
          <Document>
            <Viewport>
              <Drawing viewBox="2 160 968 449" preserveAspectRatio="xMinYMin meet" shapeRendering="crispEdges" fill="none">
                <g stroke="#fff">
                  <path d="M326.500 325.500L542.500 200.500L632.500 253.500L416.500 378.500Z" />
                  <path d="M326.500 500.500L542.500 375.500L632.500 427.500L416.500 552.500Z" />
                  <path d="M326.500 325.500V500.500M542.500 200.500V375.500M632.500 253.500V427.500M416.500 378.500V552.500" />
                </g>
                <path d="M151 160L479 349.500M543 387L926 608.500M487 608.500L970 331" stroke="#00ff00" />
                <path d="M702.500 476.500h10v10h-10zM704.500 479.500l6 5M710.500 479.500l-6 5" stroke="#00ff00" />
                <g shapeRendering="auto">
                  <path d="M708.500 486v16l6-6.500 11 5.500z" fill="#123c1c" stroke="#2c9a40" strokeWidth="1.500" />
                  <path d="M707 484h3v2h-3z" fill="#fff" />
                </g>
                <g stroke="#fff">
                  <path d="M60.500 554v43M60.500 597.500L94 578M60.500 597.500L28 579" />
                  <path d="M54.500 597l6-3 6 3-6 4zM57 598h8" />
                  <path d="M98.500 575.500h-7l-2 4 2 3 4-1zM92 577l3 2-4 2M23.500 575.500h8l1 5-3 2-3-3zM28 577v3l3 1" />
                </g>
                <g fill="#fff" fontFamily="Lato, sans-serif" fontWeight="300" fontSize="16" textAnchor="middle" shapeRendering="auto">
                  <text x="60" y="547">Z</text>
                  <text x="109" y="576">X</text>
                  <text x="14" y="575">Y</text>
                </g>
              </Drawing>
            </Viewport>
            <SheetTabs>
              <SheetNav aria-label="First sheet"><svg width="12" height="10"><path d="M2.500 1v8" stroke="#000" /><path d="M9 1v8L4 5z" /></svg></SheetNav>
              <SheetNav aria-label="Previous sheet"><svg width="12" height="10"><path d="M8 1v8L3 5z" /></svg></SheetNav>
              <SheetNav aria-label="Next sheet"><svg width="12" height="10"><path d="M4 1v8l5-4z" /></svg></SheetNav>
              <SheetNav aria-label="Last sheet"><svg width="12" height="10"><path d="M9.500 1v8" stroke="#000" /><path d="M3 1v8l5-4z" /></svg></SheetNav>
              <TabList>
                <SheetTab $on>
                  <TabShape viewBox="0 0 42 15" preserveAspectRatio="none"><path d="M0 0l6 14h29l6-14z" stroke="#000" /></TabShape>
                  <TabText><Mixed text="模型" size={13} /></TabText>
                </SheetTab>
                {['布局1', '布局2'].map((t) => (
                  <SheetTab key={t}>
                    <TabShape viewBox="0 0 45 15" preserveAspectRatio="none"><path d="M0 4l4 9.500h36l6-13.500" fill="none" stroke="#000" strokeWidth="1.300" /></TabShape>
                    <TabText><Mixed text={t} /></TabText>
                  </SheetTab>
                ))}
              </TabList>
            </SheetTabs>
          </Document>
          <SideBar><Grip across /><Tools names="line xline pline polygon rect arc circle revcloud spline ellipse ellipseArc insert block point hatch region mtext" /></SideBar>
          <SideBar><Grip across /><Tools names="erase copyObj mirror offset array move rotate scale stretch trim extend breakPt breakObj chamfer fillet explode" /></SideBar>
        </WorkArea>

        <SnapDock>
          <ToolRow>
            <Bar><Grip /><Tools names="trackPt snapFrom | endpoint midpoint intersection apparent extension | centre quadrant tangent | perp parallel snapInsert node | nearest snapNone | magnet" /></Bar>
          </ToolRow>
        </SnapDock>

        <CommandDock>
          <CommandGrip><Grip /></CommandGrip>
          <CommandBody>
            <History>
              <HistoryText>
                <p><Mixed size={15} text="命令: _-view 输入选项 [?/正交(O)/删除(D)/恢复(R)/保存(S)/UCS(U)/窗口(W)]:" /></p>
                <p><Mixed size={15} text="_swiso 正在重生成模型。" /></p>
              </HistoryText>
              <ScrollColumn>
                <ScrollButton aria-label="Scroll up"><Chevron turn={180} /></ScrollButton>
                <ScrollButton aria-label="Scroll down"><Chevron /></ScrollButton>
              </ScrollColumn>
            </History>
            <PromptRow>
              <PromptLabel htmlFor="prompt"><Mixed size={15} text="命令:" /></PromptLabel>
              <PromptInput id="prompt" />
              <ScrollRow>
                <ScrollButton aria-label="Scroll left"><Chevron turn={90} /></ScrollButton>
                <Thumb><i /><i /><i /></Thumb>
                <Track />
                <ScrollButton aria-label="Scroll right"><Chevron turn={-90} /></ScrollButton>
              </ScrollRow>
            </PromptRow>
          </CommandBody>
        </CommandDock>

        <StatusBar>
          <Coordinates>1512.4895, -195.4464, 0.0000</Coordinates>
          {toggles.map(([t, on]) => (
            <StatusToggle key={t} $on={on} $wide={t.length > 2} aria-pressed={on}><Mixed text={t} /></StatusToggle>
          ))}
          <Tray>
            <TrayButton aria-label="Communication center"><Icon name="dish" /></TrayButton>
            <TrayMenu aria-label="Status bar menu" />
          </Tray>
        </StatusBar>
      </Window>
    </>
  );
}
